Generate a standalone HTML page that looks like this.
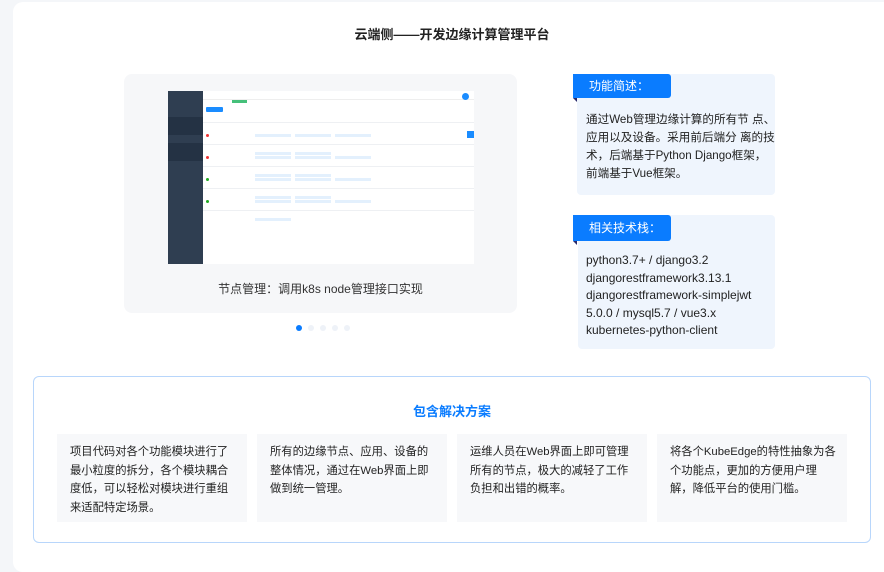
<!DOCTYPE html><html><head><meta charset="utf-8"><style>
*{margin:0;padding:0;box-sizing:border-box}
body{width:884px;height:557px;background:#f4f6f9;font-family:"Liberation Sans","Noto Sans CJK SC",sans-serif;color:#222;position:relative;overflow:hidden}
.main{position:absolute;left:13px;top:2px;width:880px;height:570px;background:#fff;border-radius:10px}
.abs{position:absolute;white-space:nowrap}
.t{font-size:11.6px;line-height:18px}
.cell{position:absolute;top:434px;width:190px;height:88px;background:#f7f8fa;padding:9px 13px;font-size:11.3px;line-height:18.5px;color:#222;white-space:nowrap}
.tag{position:absolute;left:573px;width:98px;background:#0a7cff;color:#fff;font-size:12px;border-radius:0 3px 3px 0;padding-left:16px}
.tag:after{content:"";position:absolute;left:0;bottom:-4px;border-top:4px solid #2a2a6a;border-left:4px solid transparent}
.row{position:absolute;left:35px;right:0;height:21px;border-bottom:1px solid #eef0f3}
.pill{display:inline-block;height:3px;background:#e3f0fd;margin:1px 2px;width:36px}
</style></head><body>
<div class="main"></div>
<div class="abs" style="left:10px;top:24px;width:884px;text-align:center;font-size:13px;font-weight:bold;color:#222">云端侧——开发边缘计算管理平台</div>

<div class="abs" style="left:124px;top:74px;width:393px;height:239px;background:#f6f7f9;border-radius:8px"></div>
<div class="abs" style="left:168px;top:91px;width:306px;height:173px;background:#fff;overflow:hidden">
 <div class="abs" style="left:0;top:0;width:35px;height:173px;background:#2f3e51"></div>
 <div class="abs" style="left:0;top:26px;width:35px;height:18px;background:#243244"></div>
 <div class="abs" style="left:0;top:52px;width:35px;height:18px;background:#243244"></div>
 <div class="abs" style="left:35px;top:8px;right:0;border-top:1px solid #eee"></div>
 <div class="abs" style="left:64px;top:9px;width:15px;height:3px;background:#45c07a"></div>
 <div class="abs" style="left:38px;top:16px;width:17px;height:5px;background:#1a8cff;border-radius:1px"></div>
 <div class="abs" style="right:5px;top:2px;width:7px;height:7px;background:#1a8cff;border-radius:50%"></div>
 <div class="abs" style="right:0;top:40px;width:7px;height:7px;background:#1a8cff"></div>
 <div class="row" style="top:28px;height:4px"></div>
 <div class="row" style="top:32px;height:22px"><div style="position:absolute;left:50px;top:2px;width:120px;white-space:normal"><span class="pill"></span><span class="pill"></span><span class="pill"></span><span class="pill"></span><span class="pill"></span></div></div>
 <div class="row" style="top:54px;height:22px"><div style="position:absolute;left:50px;top:2px;width:120px;white-space:normal"><span class="pill"></span><span class="pill"></span><span class="pill"></span><span class="pill"></span><span class="pill"></span></div></div>
 <div class="row" style="top:76px;height:22px"><div style="position:absolute;left:50px;top:2px;width:120px;white-space:normal"><span class="pill"></span><span class="pill"></span><span class="pill"></span><span class="pill"></span><span class="pill"></span></div></div>
 <div class="row" style="top:98px;height:22px"><div style="position:absolute;left:50px;top:2px;width:120px;white-space:normal"><span class="pill"></span><span class="pill"></span><span class="pill"></span><span class="pill"></span></div></div>
 <div class="abs" style="left:38px;top:43px;width:3px;height:3px;background:#e33;border-radius:50%"></div>
 <div class="abs" style="left:38px;top:65px;width:3px;height:3px;background:#e33;border-radius:50%"></div>
 <div class="abs" style="left:38px;top:87px;width:3px;height:3px;background:#2a2;border-radius:50%"></div>
 <div class="abs" style="left:38px;top:109px;width:3px;height:3px;background:#2a2;border-radius:50%"></div>
</div>
<div class="abs" style="left:124px;top:280px;width:393px;text-align:center;font-size:12px;color:#333">节点管理：调用k8s node管理接口实现</div>
<div class="abs" style="left:296px;top:325px;width:6px;height:6px;border-radius:50%;background:#0a7cff"></div>
<div class="abs" style="left:308px;top:325px;width:6px;height:6px;border-radius:50%;background:#eef2f8"></div>
<div class="abs" style="left:320px;top:325px;width:6px;height:6px;border-radius:50%;background:#eef2f8"></div>
<div class="abs" style="left:332px;top:325px;width:6px;height:6px;border-radius:50%;background:#eef2f8"></div>
<div class="abs" style="left:344px;top:325px;width:6px;height:6px;border-radius:50%;background:#eef2f8"></div>

<div class="abs" style="left:577px;top:74px;width:198px;height:121px;background:#eff5fd;border-radius:4px"></div>
<div class="tag" style="top:74px;height:24px;line-height:24px">功能简述：</div>
<div class="abs t" style="left:586px;top:111px">通过Web管理边缘计算的所有节 点、<br>应用以及设备。采用前后端分 离的技<br>术，后端基于Python Django框架，<br>前端基于Vue框架。</div>

<div class="abs" style="left:578px;top:215px;width:197px;height:134px;background:#eff5fd;border-radius:4px"></div>
<div class="tag" style="top:215px;height:26px;line-height:26px">相关技术栈：</div>
<div class="abs t" style="left:586px;top:252px;line-height:17.6px;font-size:12px">python3.7+ / django3.2<br>djangorestframework3.13.1<br>djangorestframework-simplejwt<br>5.0.0 / mysql5.7 / vue3.x<br>kubernetes-python-client</div>

<div class="abs" style="left:33px;top:376px;width:838px;height:167px;border:1px solid #b8d6fb;border-radius:6px;background:#fff"></div>
<div class="abs" style="left:33px;top:401px;width:838px;text-align:center;font-size:13px;font-weight:bold;color:#0a7cff">包含解决方案</div>
<div class="cell" style="left:57px">项目代码对各个功能模块进行了<br>最小粒度的拆分，各个模块耦合<br>度低，可以轻松对模块进行重组<br>来适配特定场景。</div>
<div class="cell" style="left:257px">所有的边缘节点、应用、设备的<br>整体情况，通过在Web界面上即<br>做到统一管理。</div>
<div class="cell" style="left:457px">运维人员在Web界面上即可管理<br>所有的节点，极大的减轻了工作<br>负担和出错的概率。</div>
<div class="cell" style="left:657px">将各个KubeEdge的特性抽象为各<br>个功能点，更加的方便用户理<br>解，降低平台的使用门槛。</div>
</body></html>
